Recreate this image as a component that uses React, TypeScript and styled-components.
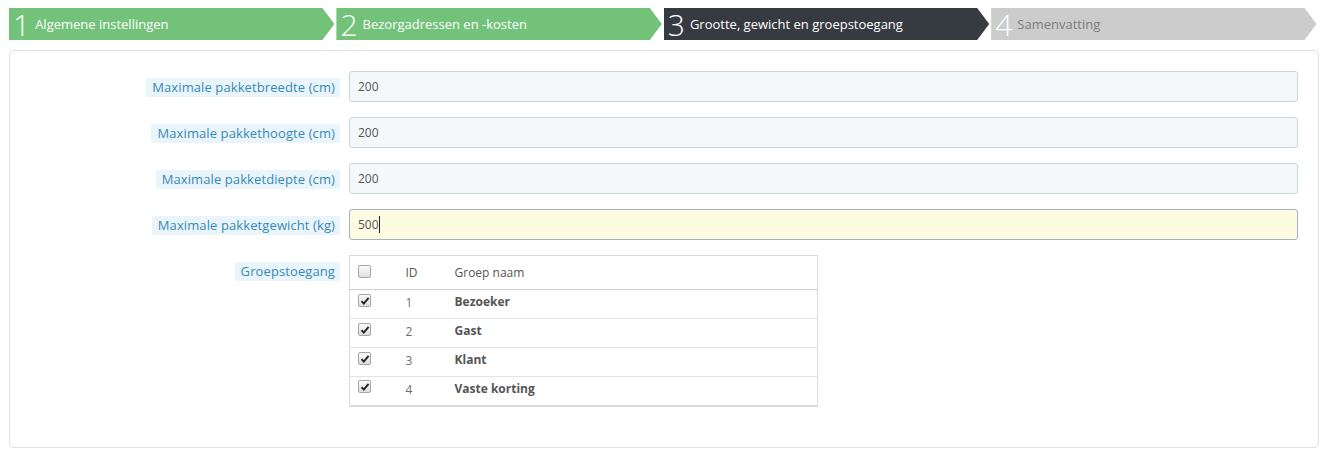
import React from "react";
import styled, { createGlobalStyle } from "styled-components";

const Global = createGlobalStyle`
  html, body { margin: 0; padding: 0; background: #fff; }
  body { font-family: "Open Sans", "Liberation Sans", sans-serif; font-size: 12px; color: #555; }
  * { box-sizing: border-box; }
`;

const Page = styled.div`
  padding: 8px 12px 0 9px;
`;

const Steps = styled.ol`
  list-style: none;
  margin: 0;
  padding: 0;
  display: flex;
  gap: 2px;
  height: 32px;
`;

type StepKind = "done" | "current" | "todo";

const stepBg: Record<StepKind, string> = {
  done: "#72c279",
  current: "#363a41",
  todo: "#cccccc",
};

const Step = styled.li<{ $kind: StepKind }>`
  flex: 0 0 325.4px;
  height: 32px;
  display: flex;
  align-items: center;
  padding-left: 4px;
  background: ${(p) => stepBg[p.$kind]};
  clip-path: polygon(0 0, calc(100% - 12px) 0, 100% 50%, calc(100% - 12px) 100%, 0 100%);
  color: ${(p) => (p.$kind === "todo" ? "#7d7d7d" : "#fff")};
`;

const StepNum = styled.span`
  font-size: 30px;
  font-weight: 300;
  line-height: 32px;
  color: #fff;
  margin-right: 5px;
  margin-top: 2px;
`;

const StepLabel = styled.span`
  font-size: 13px;
  line-height: 32px;
`;

const Panel = styled.div`
  margin-top: 10px;
  border: 1px solid #e0e0e0;
  border-radius: 5px;
  padding: 20px 20px 40px 0;
  box-shadow: 0 1px 0 rgba(0, 0, 0, 0.03);
`;

const Row = styled.div`
  display: grid;
  grid-template-columns: 330px 1fr;
  column-gap: 9px;
  align-items: start;
  margin-bottom: 15px;
  &:last-child { margin-bottom: 0; }
`;

const LabelCell = styled.div`
  text-align: right;
  padding-top: 7px;
`;

const Tip = styled.span`
  display: inline-block;
  background: #eaf5fb;
  color: #3689b8;
  font-size: 13px;
  letter-spacing: 0.1px;
  line-height: 19px;
  padding: 0 5px 0 6px;
  border-radius: 2px;
`;

const Field = styled.div`
  position: relative;
`;

const Input = styled.input<{ $focused?: boolean }>`
  display: block;
  width: 100%;
  height: 31px;
  padding: 0 8px;
  font-family: "Open Sans", "Liberation Sans", sans-serif;
  font-size: 12px;
  color: #555;
  background: ${(p) => (p.$focused ? "#fefbe3" : "#f5f8f9")};
  border: 1px solid ${(p) => (p.$focused ? "#a3b3ba" : "#c7d6db")};
  border-radius: 3px;
  outline: none;
  caret-color: transparent;
`;

const Caret = styled.span`
  position: absolute;
  left: 30px;
  top: 7px;
  width: 1px;
  height: 17px;
  background: #222;
`;

const Table = styled.table`
  width: 469px;
  border-collapse: collapse;
  border: 1px solid #dcdcdc;
  border-bottom: 2px solid #dcdcdc;
  font-size: 12px;
`;

const Th = styled.th<{ $w?: number }>`
  text-align: left;
  font-weight: normal;
  color: #555;
  height: 34px;
  padding: 0 0 0 10px;
  width: ${(p) => (p.$w ? `${p.$w}px` : "auto")};
  border-bottom: 1px solid #cfcfcf;
  vertical-align: middle;
`;

const Td = styled.td<{ $bold?: boolean; $id?: boolean }>`
  height: 29px;
  padding: 0 0 ${(p) => (p.$id ? 3 : 5)}px 10px;
  border-bottom: 1px solid #e4e4e4;
  font-weight: ${(p) => (p.$bold ? 700 : 400)};
  color: ${(p) => (p.$id ? "#6a6f7a" : "#555")};
  vertical-align: middle;
  tr:last-child > & { border-bottom: none; }
`;

const BoxCell = styled.td`
  width: 46px;
  height: 29px;
  padding: 0 0 5px 8px;
  border-bottom: 1px solid #e4e4e4;
  vertical-align: middle;
  tr:last-child > & { border-bottom: none; }
`;

const BoxHead = styled.th`
  width: 46px;
  height: 34px;
  padding: 0 0 0 8px;
  border-bottom: 1px solid #cfcfcf;
  vertical-align: middle;
  text-align: left;
`;

const Box = styled.span`
  display: block;
  width: 13px;
  height: 13px;
  border: 1px solid #a6a6a6;
  border-radius: 2px;
  background: linear-gradient(#fcfcfc, #dedede);
  position: relative;
  margin-top: -3px;
  svg { position: absolute; left: 1px; top: 1px; }
`;

const Check = ({ on }: { on: boolean }) => (
  <Box>
    {on && (
      <svg width="10" height="10" viewBox="0 0 10 10">
        <path d="M1.5 5.2 L3.8 7.6 L8.6 1.8" fill="none" stroke="#222" strokeWidth="1.9" />
      </svg>
    )}
  </Box>
);

const fields = [
  { label: "Maximale pakketbreedte (cm)", value: "200" },
  { label: "Maximale pakkethoogte (cm)", value: "200" },
  { label: "Maximale pakketdiepte (cm)", value: "200" },
  { label: "Maximale pakketgewicht (kg)", value: "500", focused: true },
];

const groups = [
  { id: 1, name: "Bezoeker" },
  { id: 2, name: "Gast" },
  { id: 3, name: "Klant" },
  { id: 4, name: "Vaste korting" },
];

const steps: { n: number; label: string; kind: StepKind }[] = [
  { n: 1, label: "Algemene instellingen", kind: "done" },
  { n: 2, label: "Bezorgadressen en -kosten", kind: "done" },
  { n: 3, label: "Grootte, gewicht en groepstoegang", kind: "current" },
  { n: 4, label: "Samenvatting", kind: "todo" },
];

export default function App() {
  return (
    <Page>
      <Global />
      <Steps>
        {steps.map((s) => (
          <Step key={s.n} $kind={s.kind}>
            <StepNum>{s.n}</StepNum>
            <StepLabel>{s.label}</StepLabel>
          </Step>
        ))}
      </Steps>
      <Panel>
        {fields.map((f) => (
          <Row key={f.label}>
            <LabelCell>
              <Tip>{f.label}</Tip>
            </LabelCell>
            <Field>
              <Input defaultValue={f.value} $focused={f.focused} />
              {f.focused && <Caret />}
            </Field>
          </Row>
        ))}
        <Row>
          <LabelCell>
            <Tip>Groepstoegang</Tip>
          </LabelCell>
          <div>
            <Table>
              <thead>
                <tr>
                  <BoxHead>
                    <Check on={false} />
                  </BoxHead>
                  <Th $w={49}>ID</Th>
                  <Th>Groep naam</Th>
                </tr>
              </thead>
              <tbody>
                {groups.map((g) => (
                  <tr key={g.id}>
                    <BoxCell>
                      <Check on />
                    </BoxCell>
                    <Td $id>{g.id}</Td>
                    <Td $bold>{g.name}</Td>
                  </tr>
                ))}
              </tbody>
            </Table>
          </div>
        </Row>
      </Panel>
    </Page>
  );
}
